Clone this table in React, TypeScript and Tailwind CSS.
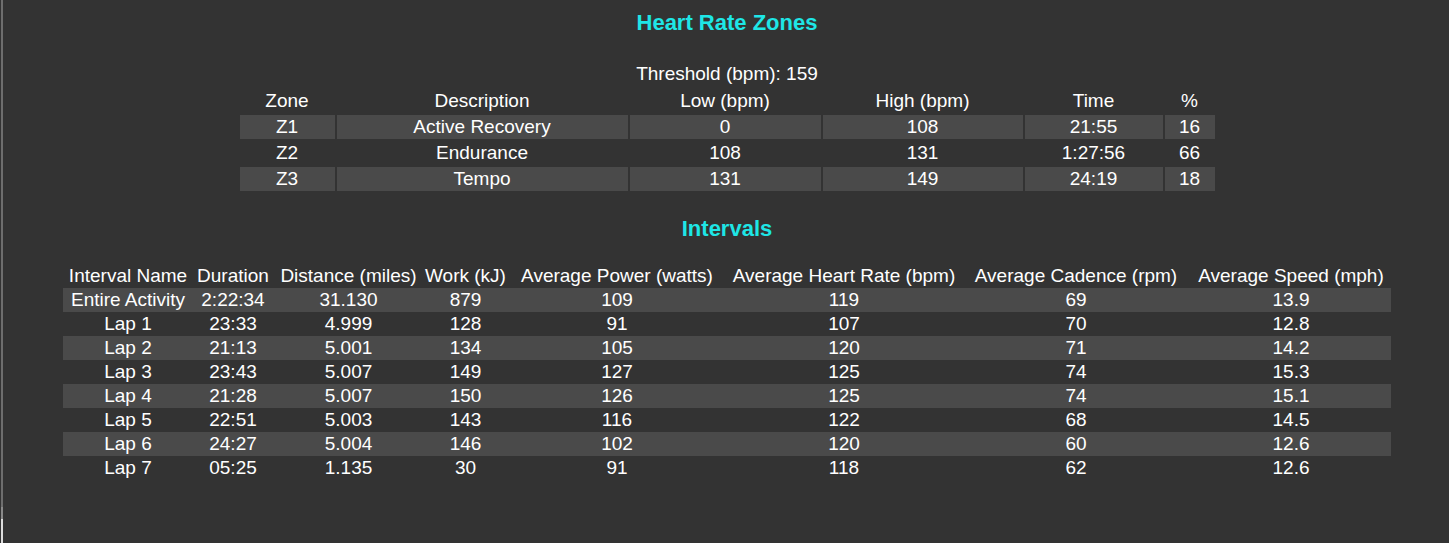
import React from "react";

const zones = [
  { zone: "Z1", desc: "Active Recovery", low: "0", high: "108", time: "21:55", pct: "16" },
  { zone: "Z2", desc: "Endurance", low: "108", high: "131", time: "1:27:56", pct: "66" },
  { zone: "Z3", desc: "Tempo", low: "131", high: "149", time: "24:19", pct: "18" },
];

const intervals = [
  ["Entire Activity", "2:22:34", "31.130", "879", "109", "119", "69", "13.9"],
  ["Lap 1", "23:33", "4.999", "128", "91", "107", "70", "12.8"],
  ["Lap 2", "21:13", "5.001", "134", "105", "120", "71", "14.2"],
  ["Lap 3", "23:43", "5.007", "149", "127", "125", "74", "15.3"],
  ["Lap 4", "21:28", "5.007", "150", "126", "125", "74", "15.1"],
  ["Lap 5", "22:51", "5.003", "143", "116", "122", "68", "14.5"],
  ["Lap 6", "24:27", "5.004", "146", "102", "120", "60", "12.6"],
  ["Lap 7", "05:25", "1.135", "30", "91", "118", "62", "12.6"],
];

const intervalCols = [
  { label: "Interval Name", w: "w-[130px]" },
  { label: "Duration", w: "w-[80px]" },
  { label: "Distance (miles)", w: "w-[151px]" },
  { label: "Work (kJ)", w: "w-[83px]" },
  { label: "Average Power (watts)", w: "w-[220px]" },
  { label: "Average Heart Rate (bpm)", w: "w-[234px]" },
  { label: "Average Cadence (rpm)", w: "w-[230px]" },
  { label: "Average Speed (mph)", w: "w-[200px]" },
];

export default function App() {
  return (
    <div className="flex min-h-[543px] bg-[#333333] pl-px text-white text-[19px] font-['Liberation_Sans',Arial,sans-serif]">
      {/* left edge strip */}
      <div className="flex w-[2px] shrink-0 flex-col">
        <div className="flex-1 bg-[#6e6e6e]" />
        <div className="h-[12px] bg-[#8a8a8a]" />
        <div className="h-[24px] bg-[#dcdcdc]" />
      </div>

      <div className="flex flex-1 flex-col items-center pl-[2px]">
        <h3 className="mt-[10px] text-[22px] font-bold leading-[26px] text-[#1ee6e6]">Heart Rate Zones</h3>

        <div className="mt-[27px] leading-[22px]">Threshold (bpm): 159</div>

        <table className="mt-[2px] table-fixed border-separate border-spacing-[2px] text-center leading-[24px]">
          <thead>
            <tr>
              <th className="w-[95px] p-0 font-normal">Zone</th>
              <th className="w-[291px] p-0 font-normal">Description</th>
              <th className="w-[191px] p-0 font-normal">Low (bpm)</th>
              <th className="w-[200px] p-0 font-normal">High (bpm)</th>
              <th className="w-[138px] p-0 font-normal">Time</th>
              <th className="w-[50px] p-0 font-normal">%</th>
            </tr>
          </thead>
          <tbody>
            {zones.map((z, i) => (
              <tr key={z.zone} className={i % 2 === 0 ? "bg-[#4a4a4a]" : ""}>
                <td className="p-0">{z.zone}</td>
                <td className="p-0">{z.desc}</td>
                <td className="p-0">{z.low}</td>
                <td className="p-0">{z.high}</td>
                <td className="p-0">{z.time}</td>
                <td className="p-0">{z.pct}</td>
              </tr>
            ))}
          </tbody>
        </table>

        <h3 className="mt-[23px] text-[22px] font-bold leading-[26px] text-[#1ee6e6]">Intervals</h3>

        <table className="mt-[22px] table-fixed border-collapse text-center leading-[24px]">
          <thead>
            <tr>
              {intervalCols.map((c) => (
                <th key={c.label} className={`${c.w} p-0 font-normal whitespace-nowrap`}>{c.label}</th>
              ))}
            </tr>
          </thead>
          <tbody>
            {intervals.map((row, i) => (
              <tr key={row[0]} className={i % 2 === 0 ? "bg-[#4a4a4a]" : ""}>
                {row.map((cell, j) => (
                  <td key={j} className="p-0 whitespace-nowrap">{cell}</td>
                ))}
              </tr>
            ))}
          </tbody>
        </table>
      </div>
    </div>
  );
}
